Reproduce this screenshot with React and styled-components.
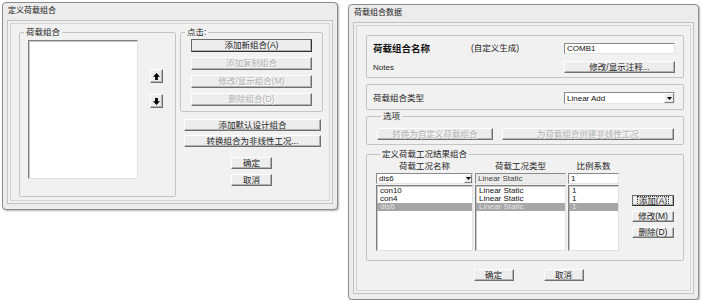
import styled, { createGlobalStyle } from "styled-components"

const GlobalStyle = createGlobalStyle`
  html, body { margin: 0; padding: 0; background: #ffffff; }
  body {
    font-family: "Liberation Sans", "Noto Sans CJK SC", sans-serif;
    font-size: 8.5px;
    color: #222;
  }
  * { box-sizing: border-box; }
`

const combos = [
  { name: "con10", type: "Linear Static", sf: "1" },
  { name: "con4", type: "Linear Static", sf: "1" },
  { name: "dis6", type: "Linear Static", sf: "1", selected: true },
]

function UpArrow({ down }) {
  return (
    <svg width="7" height="7" viewBox="0 0 8 8" style={down ? { transform: "rotate(180deg)" } : null}>
      <path d="M4 0 L8 4.2 H5.6 V8 H2.4 V4.2 H0 Z" fill="#000" />
    </svg>
  )
}

function DropArrow() {
  return (
    <svg width="5" height="3" viewBox="0 0 5 3">
      <path d="M0 0 H5 L2.5 3 Z" fill="#000" />
    </svg>
  )
}

export default function App() {
  return (
    <>
      <GlobalStyle />
      <Page>
        <Window $w={336} $h={208}>
          <Title>定义荷载组合</Title>
          <Client>
            <LeftPanel>
              <Group style={{ height: 171 }}>
                <Legend>荷载组合</Legend>
                <ListRow>
                  <ListBox $w={110} $h={139} />
                  <ArrowStack>
                    <ArrowBtn><UpArrow /></ArrowBtn>
                    <ArrowBtn><UpArrow down /></ArrowBtn>
                  </ArrowStack>
                </ListRow>
              </Group>

              <RightColumn>
                <Group>
                  <Legend>点击:</Legend>
                  <ClickStack>
                    <Btn $w={121} $h={13} $default>添加新组合(A)</Btn>
                    <Btn $w={121} $h={13} disabled>添加复制组合</Btn>
                    <Btn $w={121} $h={13} disabled>修改/显示组合(M)</Btn>
                    <Btn $w={121} $h={13} disabled>删除组合(D)</Btn>
                  </ClickStack>
                </Group>
                <ActionStack>
                  <Btn $w={137}>添加默认设计组合</Btn>
                  <Btn $w={137}>转换组合为非线性工况...</Btn>
                </ActionStack>
                <OkStack>
                  <Btn $w={41}>确定</Btn>
                  <Btn $w={41}>取消</Btn>
                </OkStack>
              </RightColumn>
            </LeftPanel>
          </Client>
        </Window>

        <Window $w={351} $h={296} $top={2}>
          <Title>荷载组合数据</Title>
          <Client>
            <RightPanel>
              <Box $pad="7px 8px 4px 6px">
                <BoldLabel>荷载组合名称</BoldLabel>
                <span>(自定义生成)</span>
                <TextBox $h={11}>COMB1</TextBox>
                <LatinLabel>Notes</LatinLabel>
                <span />
                <Btn $w={111}>修改/显示注释...</Btn>
              </Box>

              <Box $pad="7px 8px 5px 6px" $mt={6}>
                <span>荷载组合类型</span>
                <span />
                <Select $h={12}>
                  <span>Linear Add</span>
                  <DropBtn $w={10}><DropArrow /></DropBtn>
                </Select>
              </Box>

              <Group $pad="6px 8px 4px 10px">
                <Legend>选项</Legend>
                <OptionRow>
                  <Btn $w={116} disabled>转换为自定义荷载组合</Btn>
                  <Btn $w={172} disabled>为荷载组合创建非线性工况</Btn>
                </OptionRow>
              </Group>

              <Group $pad="0 8px 9px 9px" $mt={3}>
                <Legend>定义荷载工况结果组合</Legend>
                <CaseArea>
                  <Table>
                    <Header>荷载工况名称</Header>
                    <Header>荷载工况类型</Header>
                    <Header>比例系数</Header>

                    <Select>
                      <span>dis6</span>
                      <DropBtn $w={8}><DropArrow /></DropBtn>
                    </Select>
                    <TextBox $readonly>Linear Static</TextBox>
                    <TextBox>1</TextBox>

                    <ListBox>
                      {combos.map(c => <Item key={c.name} $sel={c.selected}>{c.name}</Item>)}
                    </ListBox>
                    <ListBox>
                      {combos.map(c => <Item key={c.name} $sel={c.selected}>{c.type}</Item>)}
                    </ListBox>
                    <ListBox>
                      {combos.map(c => <Item key={c.name} $sel={c.selected}>{c.sf}</Item>)}
                    </ListBox>
                  </Table>
                  <SideButtons>
                    <Btn $w={42} $h={11} $default><Focus>添加(A)</Focus></Btn>
                    <Btn $w={42} $h={11}>修改(M)</Btn>
                    <Btn $w={42} $h={11}>删除(D)</Btn>
                  </SideButtons>
                </CaseArea>
              </Group>

              <Footer>
                <Btn $w={40}>确定</Btn>
                <Btn $w={40}>取消</Btn>
              </Footer>
            </RightPanel>
          </Client>
        </Window>
      </Page>
    </>
  )
}

const Page = styled.div`
  display: flex;
  align-items: flex-start;
  gap: 10px;
  padding: 2px 0 0 2px;
`

const Window = styled.div`
  width: ${p => p.$w}px;
  height: ${p => p.$h}px;
  margin-top: ${p => p.$top || 0}px;
  display: flex;
  flex-direction: column;
  border: 1px solid #8c8c8c;
  border-radius: 4px;
  background: #ececec;
  box-shadow: 1px 1px 2px rgba(0, 0, 0, 0.3);
`

const Title = styled.div`
  height: 17px;
  line-height: 15px;
  padding-left: 5px;
  font-size: 8px;
  white-space: nowrap;
`

const Client = styled.div`
  flex: 1;
  display: flex;
  margin: 0 4px 5px;
  padding: 2px;
  border: 1px solid #c2c2c2;
  background: #f1f1f1;
`

const LeftPanel = styled.div`
  flex: 1;
  display: grid;
  grid-template-columns: 157px 143px;
  column-gap: 4px;
  align-items: start;
  padding: 2px 0 0 8px;
  border: 1px solid #d4d4d4;
`

const RightPanel = styled.div`
  flex: 1;
  display: flex;
  flex-direction: column;
  padding: 9px 6px 7px 9px;
  border: 1px solid #d4d4d4;
`

const Group = styled.fieldset`
  margin: ${p => p.$mt || 0}px 0 0 0;
  min-width: 0;
  padding: ${p => p.$pad || "0"};
  border: 1px solid #c4c4c4;
  border-radius: 2px;
`

const Legend = styled.legend`
  margin-left: 4px;
  padding: 0 2px;
  font-size: 8.5px;
  line-height: 12px;
`

const ListRow = styled.div`
  display: flex;
  gap: 12px;
  padding: 2px 0 0 8px;
`

const ListBox = styled.div`
  width: ${p => (p.$w ? `${p.$w}px` : "auto")};
  height: ${p => (p.$h ? `${p.$h}px` : "auto")};
  padding-top: 1px;
  background: #fff;
  border: 1px solid;
  border-color: #7f7f7f #e2e2e2 #e2e2e2 #7f7f7f;
  box-shadow: inset 1px 1px 0 #c8c8c8;
  overflow: hidden;
`

const Item = styled.div`
  height: 8px;
  line-height: 8px;
  padding-left: 3px;
  font-size: 8px;
  white-space: nowrap;
  background: ${p => (p.$sel ? "#a6a6a6" : "transparent")};
  color: ${p => (p.$sel ? "#e4e4e4" : "#111")};
`

const ArrowStack = styled.div`
  display: flex;
  flex-direction: column;
  gap: 11px;
  padding-top: 29px;
`

const ArrowBtn = styled.button`
  width: 13px;
  height: 14px;
  padding: 0;
  display: flex;
  align-items: center;
  justify-content: center;
  background: #ededed;
  border: 1px solid;
  border-color: #fdfdfd #6f6f6f #6f6f6f #fdfdfd;
  box-shadow: inset -1px -1px 0 #b0b0b0;
`

const RightColumn = styled.div`
  display: flex;
  flex-direction: column;
`

const ClickStack = styled.div`
  display: flex;
  flex-direction: column;
  gap: 5px;
  padding: 1px 10px 5px;
`

const ActionStack = styled.div`
  display: flex;
  flex-direction: column;
  gap: 4px;
  margin-top: 7px;
  padding-left: 4px;
`

const OkStack = styled.div`
  display: flex;
  flex-direction: column;
  align-items: center;
  gap: 5px;
  margin-top: 10px;
`

const Btn = styled.button`
  width: ${p => p.$w}px;
  height: ${p => p.$h || 12}px;
  flex-shrink: 0;
  display: flex;
  align-items: center;
  justify-content: center;
  margin: 0;
  padding: 0;
  font-family: inherit;
  font-size: 8.5px;
  line-height: 1;
  white-space: nowrap;
  color: ${p => (p.disabled ? "#b0b0b0" : "#222")};
  text-shadow: ${p => (p.disabled ? "1px 1px 0 #fff" : "none")};
  background: #ededed;
  border: 1px solid;
  border-color: ${p => (p.$default ? "#6a6a6a #333 #333 #6a6a6a" : "#fdfdfd #6f6f6f #6f6f6f #fdfdfd")};
  box-shadow: inset -1px -1px 0 #b2b2b2;
  cursor: default;
`

const Focus = styled.span`
  outline: 1px dotted #333;
  padding: 0 1px;
  line-height: 8px;
`

const Box = styled.div`
  display: grid;
  grid-template-columns: 98px 1fr 111px;
  row-gap: 7px;
  align-items: center;
  margin-top: ${p => p.$mt || 0}px;
  padding: ${p => p.$pad};
  border: 1px solid #c4c4c4;
  border-radius: 2px;
  & > span { line-height: 11px; white-space: nowrap; }
`

const BoldLabel = styled.span`
  font-size: 9.5px;
  font-weight: bold;
  color: #111;
`

const LatinLabel = styled.span`
  font-size: 8px;
`

const TextBox = styled.div`
  height: ${p => p.$h || 11}px;
  padding-left: 2px;
  font-size: 8px;
  line-height: ${p => (p.$h || 11) - 2}px;
  white-space: nowrap;
  color: ${p => (p.$readonly ? "#444" : "#111")};
  background: ${p => (p.$readonly ? "#ececec" : "#fff")};
  border: 1px solid;
  border-color: #8a8a8a #e4e4e4 #e4e4e4 #8a8a8a;
`

const Select = styled.div`
  height: ${p => p.$h || 11}px;
  display: flex;
  align-items: center;
  justify-content: space-between;
  padding-left: 2px;
  font-size: 8px;
  color: #111;
  background: #fff;
  border: 1px solid;
  border-color: #8a8a8a #e4e4e4 #e4e4e4 #8a8a8a;
`

const DropBtn = styled.span`
  width: ${p => p.$w}px;
  height: 100%;
  display: flex;
  align-items: center;
  justify-content: center;
  background: #ececec;
  border: 1px solid;
  border-color: #fdfdfd #7a7a7a #7a7a7a #fdfdfd;
`

const OptionRow = styled.div`
  display: flex;
  gap: 9px;
`

const CaseArea = styled.div`
  display: flex;
  gap: 13px;
`

const Table = styled.div`
  display: grid;
  grid-template-columns: 97px 91px 51px;
  grid-template-rows: 12px 11px 66px;
  gap: 1px 2px;
`

const Header = styled.div`
  text-align: center;
  line-height: 12px;
  font-size: 8.5px;
  white-space: nowrap;
`

const SideButtons = styled.div`
  display: flex;
  flex-direction: column;
  gap: 5px;
  padding-top: 35px;
`

const Footer = styled.div`
  display: flex;
  justify-content: center;
  gap: 30px;
  margin-top: 8px;
  padding-left: 7px;
`
